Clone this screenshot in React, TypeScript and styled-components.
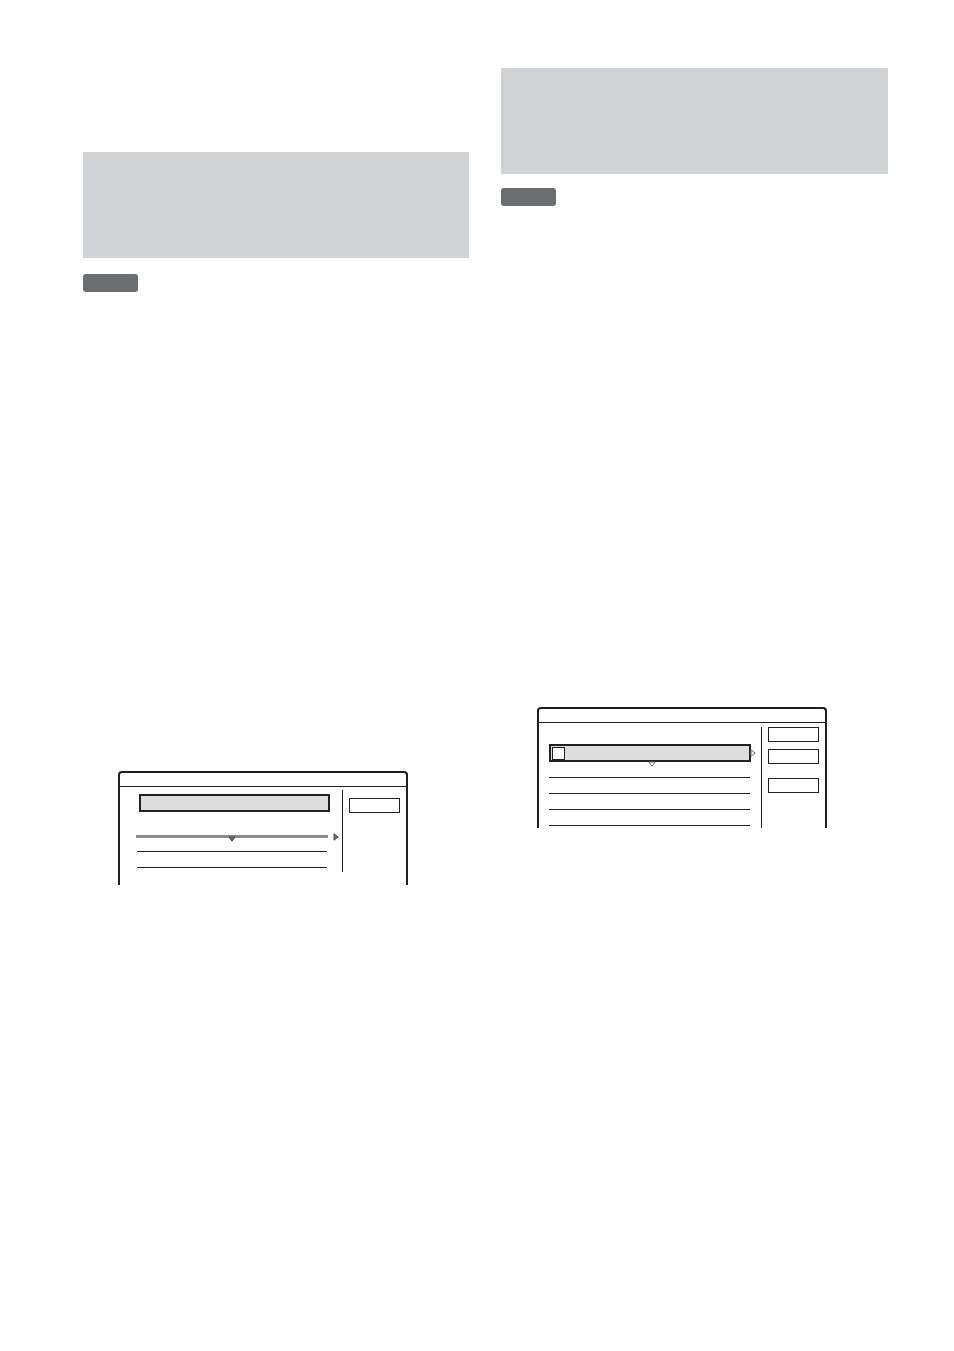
import React from 'react'
import styled, { createGlobalStyle } from 'styled-components'

const INK = '#231f20'

const GlobalStyle = createGlobalStyle`
	html, body {
		margin: 0;
		padding: 0;
		background: #ffffff;
		font-family: 'Liberation Sans', Arial, sans-serif;
	}
`

const Page = styled.div`
	display: flex;
	gap: 32px;
	width: 954px;
	min-height: 1351px;
	padding-left: 83px;
	box-sizing: border-box;
`

const Column = styled.div<{ $top: number; $width: number }>`
	display: flex;
	flex-direction: column;
	align-items: flex-start;
	width: ${(p) => p.$width}px;
	padding-top: ${(p) => p.$top}px;
`

const HeaderBand = styled.div`
	align-self: stretch;
	height: 106px;
	background: #d1d3d4;
`

const Badge = styled.div<{ $gap: number }>`
	width: 55px;
	height: 18px;
	margin-top: ${(p) => p.$gap}px;
	border-radius: 3px;
	background: #6d6e71;
`

const Frame = styled.div<{ $top: number; $left: number; $height: number }>`
	display: flex;
	flex-direction: column;
	width: 290px;
	height: ${(p) => p.$height}px;
	margin-top: ${(p) => p.$top}px;
	margin-left: ${(p) => p.$left}px;
	border: 2px solid ${INK};
	border-bottom: none;
	border-radius: 4px 4px 0 0;
	box-sizing: border-box;
`

const TitleBar = styled.div`
	height: 13px;
	border-bottom: 1px solid ${INK};
`

const Body = styled.div`
	display: flex;
	flex: 1;
`

const ListPane = styled.div<{ $top: number }>`
	display: flex;
	flex-direction: column;
	width: 222px;
	padding-top: ${(p) => p.$top}px;
	box-sizing: border-box;
`

const Divider = styled.div<{ $top: number; $height?: number }>`
	width: 1px;
	margin-top: ${(p) => p.$top}px;
	background: ${INK};
	${(p) => (p.$height ? `height: ${p.$height}px; align-self: flex-start;` : '')}
`

const SidePane = styled.div<{ $top: number }>`
	display: flex;
	flex-direction: column;
	padding: ${(p) => p.$top}px 0 0 6px;
`

const SideButton = styled.div<{ $gap?: number }>`
	width: 51px;
	height: 15px;
	margin-top: ${(p) => p.$gap || 0}px;
	border: 1.5px solid ${INK};
	box-sizing: border-box;
`

const HighlightBar = styled.div<{ $left: number; $width: number; $top?: number }>`
	position: relative;
	display: flex;
	align-items: center;
	width: ${(p) => p.$width}px;
	height: 18px;
	margin-left: ${(p) => p.$left}px;
	margin-top: ${(p) => p.$top || 0}px;
	padding-left: 1px;
	border: 2px solid ${INK};
	background: #dcddde;
	box-sizing: border-box;
`

const CheckBox = styled.div`
	width: 13px;
	height: 13px;
	border: 1px solid ${INK};
	background: #ffffff;
	box-sizing: border-box;
`

const Rule = styled.div<{ $left: number; $width: number; $gap: number }>`
	width: ${(p) => p.$width}px;
	height: 1px;
	margin-left: ${(p) => p.$left}px;
	margin-top: ${(p) => p.$gap}px;
	background: ${INK};
`

const SelectedRule = styled.div<{ $left: number; $width: number; $gap: number }>`
	position: relative;
	width: ${(p) => p.$width}px;
	height: 3px;
	margin-left: ${(p) => p.$left}px;
	margin-top: ${(p) => p.$gap}px;
	background: #8d8e90;
`

const Marker = styled.svg<{ $x: number; $y: number }>`
	position: absolute;
	left: ${(p) => p.$x}px;
	top: ${(p) => p.$y}px;
	overflow: visible;
`

const DownMark = ({ x, y, hollow }: { x: number; y: number; hollow?: boolean }) => (
	<Marker $x={x} $y={y} width="8" height="6" viewBox="0 0 8 6">
		<path
			d="M0.8 1 L7.2 1 L4 5.2 Z"
			fill={hollow ? '#ffffff' : '#6d6e71'}
			stroke={hollow ? '#6d6e71' : '#4d4d4f'}
			strokeWidth="1"
			strokeLinejoin="round"
		/>
	</Marker>
)

const RightMark = ({ x, y, hollow }: { x: number; y: number; hollow?: boolean }) => (
	<Marker $x={x} $y={y} width="6" height="8" viewBox="0 0 6 8">
		<path
			d="M1 0.8 L5.2 4 L1 7.2 Z"
			fill={hollow ? '#ffffff' : '#6d6e71'}
			stroke={hollow ? '#6d6e71' : '#4d4d4f'}
			strokeWidth="1"
			strokeLinejoin="round"
		/>
	</Marker>
)

const App = () => {
	return (
		<>
			<GlobalStyle />
			<Page>
				<Column $top={152} $width={386}>
					<HeaderBand />
					<Badge $gap={16} />
					<Frame $top={479} $left={35} $height={114}>
						<TitleBar />
						<Body>
							<ListPane $top={7}>
								<HighlightBar $left={19} $width={191} />
								<SelectedRule $left={16} $width={192} $gap={23}>
									<DownMark x={92} y={1} />
									<RightMark x={197} y={-2.5} />
								</SelectedRule>
								<Rule $left={17} $width={190} $gap={13} />
								<Rule $left={17} $width={190} $gap={15} />
							</ListPane>
							<Divider $top={3} $height={82} />
							<SidePane $top={11}>
								<SideButton />
							</SidePane>
						</Body>
					</Frame>
				</Column>
				<Column $top={68} $width={387}>
					<HeaderBand />
					<Badge $gap={14} />
					<Frame $top={501} $left={36} $height={121}>
						<TitleBar />
						<Body>
							<ListPane $top={21}>
								<HighlightBar $left={10} $width={202}>
									<CheckBox />
									<RightMark x={199} y={3} hollow />
									<DownMark x={97} y={15} hollow />
								</HighlightBar>
								<Rule $left={10} $width={201} $gap={15} />
								<Rule $left={10} $width={201} $gap={15} />
								<Rule $left={10} $width={201} $gap={15} />
								<Rule $left={10} $width={201} $gap={15} />
							</ListPane>
							<Divider $top={4} />
							<SidePane $top={4}>
								<SideButton />
								<SideButton $gap={7} />
								<SideButton $gap={14} />
							</SidePane>
						</Body>
					</Frame>
				</Column>
			</Page>
		</>
	)
}

export default App
